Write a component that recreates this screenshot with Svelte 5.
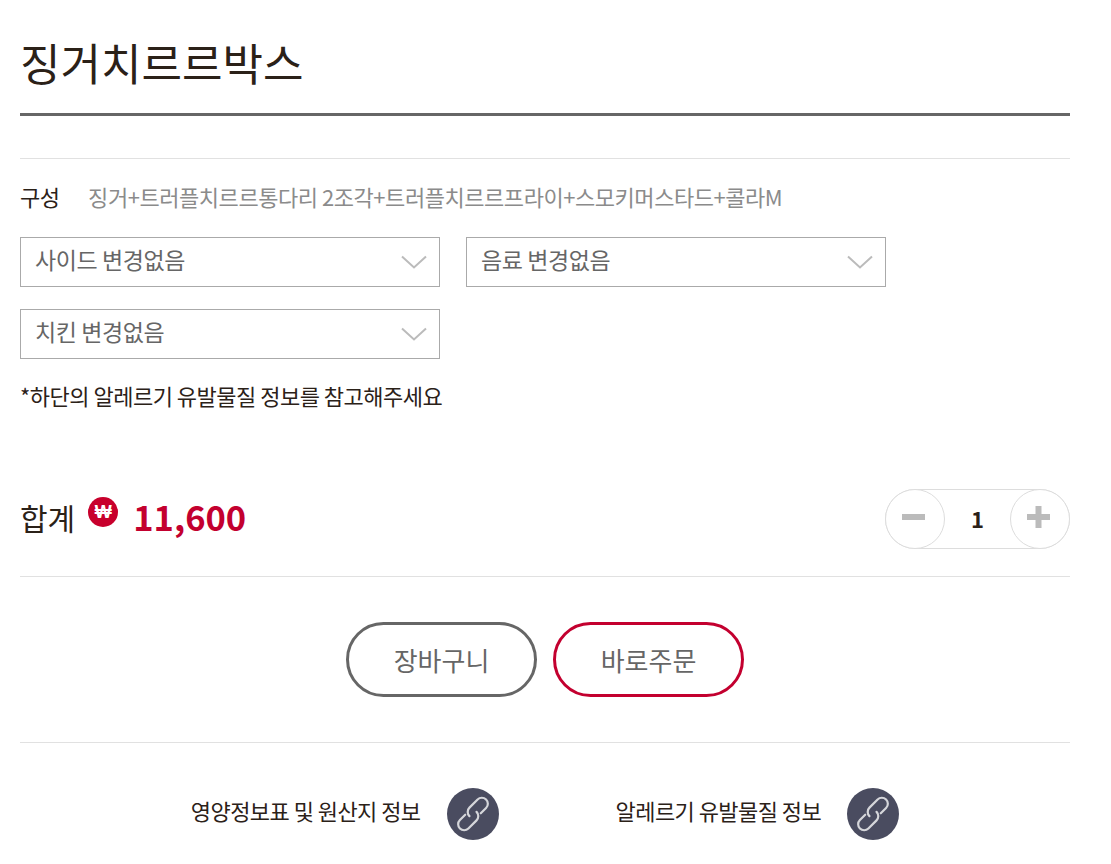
<script>
  const selects = ['사이드 변경없음', '음료 변경없음', '치킨 변경없음']
  const links = ['영양정보표 및 원산지 정보', '알레르기 유발물질 정보']
</script>

<div class="page">
  <h1 class="title">징거치르르박스</h1>

  <div class="body">
    <div class="comp">
      <span class="comp-label">구성</span>
      <span class="comp-text">징거+트러플치르르통다리 2조각+트러플치르르프라이+스모키머스타드+콜라M</span>
    </div>

    <div class="selects">
      {#each selects as label}
        <button class="select">
          <span class="select-text">{label}</span>
          <svg width="26" height="14" viewBox="0 0 26 14" fill="none" stroke="#bbb" stroke-width="2">
            <path d="M1 1.500l12 11 12-11" />
          </svg>
        </button>
      {/each}
    </div>

    <p class="note">*하단의 알레르기 유발물질 정보를 참고해주세요</p>

    <div class="total">
      <div class="price">
        <span class="total-label">합계</span>
        <span class="won">₩</span>
        <strong>11,600</strong>
      </div>
      <div class="qty">
        <button class="qty-btn" aria-label="감소">
          <svg width="23" height="22" viewBox="0 0 23 22" fill="#bbb"><rect x="0" y="8" width="23" height="6" /></svg>
        </button>
        <span class="qty-num">1</span>
        <button class="qty-btn" aria-label="증가">
          <svg width="23" height="22" viewBox="0 0 23 22" fill="#bbb"><path d="M8.500 0h6v8H23v6h-8.500v8h-6v-8H0V8h8.500z" /></svg>
        </button>
      </div>
    </div>

    <div class="actions">
      <button class="action">장바구니</button>
      <button class="action red">바로주문</button>
    </div>

    <div class="links">
      {#each links as label}
        <div class="link">
          <span class="link-text">{label}</span>
          <span class="link-icon">
            <svg width="36" height="36" viewBox="-18 -18 36 36" fill="none" stroke="#d5d6da" stroke-width="2.200" stroke-linecap="round">
              <g transform="rotate(-45)">
                <path d="M-6-5H-13.500A6 6 0 0 0-13.500 7H-2A6 6 0 0 0 4 1" />
                <path d="M6 5H13.500A6 6 0 0 0 13.500-7H2A6 6 0 0 0-4-1" />
              </g>
            </svg>
          </span>
        </div>
      {/each}
    </div>
  </div>
</div>

<style>
  :global(body) {
    margin: 0;
    background: #fff;
  }

  .page {
    padding: 0 41px 0 20px;
    font-family: 'Noto Sans CJK KR', 'Noto Sans', sans-serif;
    color: #2b2118;
    overflow: hidden;
    height: 864px;
    box-sizing: border-box;
  }

  .title {
    margin: 0;
    height: 113px;
    line-height: 124px;
    font-size: 44px;
    font-weight: 400;
    border-bottom: 3px solid #666;
  }

  .body {
    margin-top: 42px;
    border-top: 1px solid #e1e1e1;
  }

  .comp {
    display: flex;
    align-items: center;
    gap: 28.500px;
    height: 78px;
    padding-bottom: 4px;
    box-sizing: border-box;
    font-size: 22px;
    letter-spacing: -0.450px;
  }

  .comp-label {
    color: #2b2118;
  }

  .comp-text {
    color: #8b8b8b;
  }

  .selects {
    display: grid;
    grid-template-columns: 420px 420px;
    gap: 22px 26px;
  }

  .select {
    display: flex;
    align-items: center;
    justify-content: space-between;
    height: 50px;
    padding: 0 12px 0 14px;
    box-sizing: border-box;
    border: 1px solid #aaa;
    background: #fff;
    color: #666;
    font: inherit;
    font-size: 23px;
    letter-spacing: -0.400px;
  }

  .select-text {
    padding-bottom: 7px;
  }

  .note {
    margin: 18px 0 0;
    font-size: 22px;
    line-height: 36px;
    letter-spacing: -0.500px;
  }

  .total {
    display: flex;
    justify-content: space-between;
    align-items: center;
    height: 60px;
    margin-top: 76px;
    padding-bottom: 27px;
    border-bottom: 1px solid #e1e1e1;
  }

  .price {
    display: flex;
    align-items: center;
  }

  .total-label {
    font-size: 30px;
    line-height: 44px;
    margin-top: -4px;
  }

  .won {
    display: flex;
    align-items: center;
    justify-content: center;
    width: 30px;
    height: 30px;
    margin: -14px 15px 0 13px;
    border-radius: 50%;
    background: #c8002c;
    color: #fff;
    font-family: 'Liberation Sans', sans-serif;
    font-size: 18px;
    font-weight: 700;
  }

  .price strong {
    color: #c3002f;
    font-size: 34.500px;
    line-height: 1;
    font-weight: 700;
    margin-top: -5px;
  }

  .qty {
    display: flex;
    align-items: center;
    justify-content: space-between;
    width: 185px;
    height: 60px;
    box-sizing: border-box;
    border: 1px solid #ddd;
    border-radius: 30px;
  }

  .qty-btn {
    display: flex;
    align-items: center;
    justify-content: center;
    width: 60px;
    height: 60px;
    margin: -1px;
    padding: 0 3px 4px 0;
    box-sizing: border-box;
    border: 1px solid #ddd;
    border-radius: 50%;
    background: #fff;
  }

  .qty-num {
    font-size: 22px;
    font-weight: 700;
    padding-bottom: 2px;
  }

  .actions {
    display: flex;
    justify-content: center;
    gap: 16px;
    padding: 45px 0;
    border-bottom: 1px solid #e1e1e1;
  }

  .action {
    width: 191px;
    height: 75px;
    border: 3px solid #666;
    border-radius: 38px;
    background: #fff;
    color: #666;
    font: inherit;
    font-size: 26px;
  }

  .action.red {
    border-color: #c3002f;
  }

  .links {
    display: flex;
    justify-content: center;
    gap: 117px;
    margin-top: 45px;
  }

  .link {
    display: flex;
    align-items: center;
    gap: 26px;
    font-size: 22px;
    letter-spacing: -0.550px;
  }

  .link-text {
    padding-bottom: 8px;
  }

  .link-icon {
    display: flex;
    align-items: center;
    justify-content: center;
    width: 52px;
    height: 52px;
    border-radius: 50%;
    background: #4a4c60;
  }
</style>
